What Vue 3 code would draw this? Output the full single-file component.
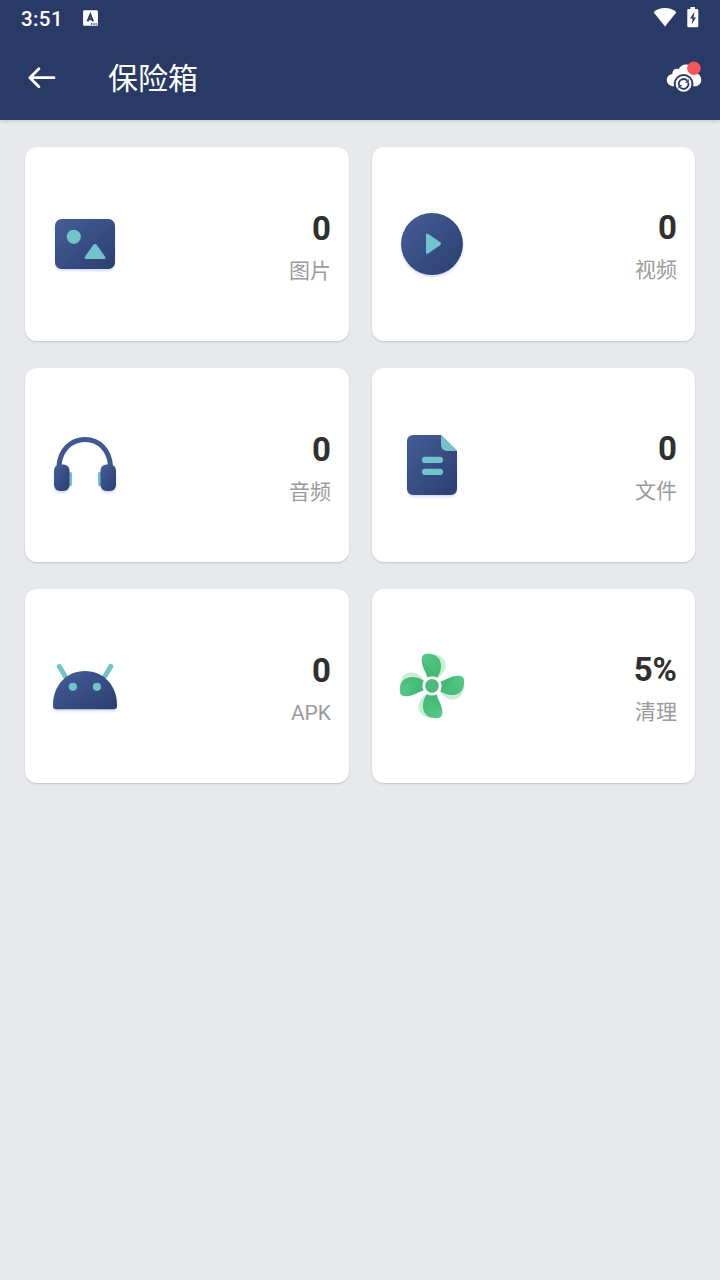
<script setup>
const cards = [
  { icon: 'image', value: '0', label: '图片' },
  { icon: 'video', value: '0', label: '视频', up: true },
  { icon: 'audio', value: '0', label: '音频' },
  { icon: 'file', value: '0', label: '文件', up: true },
  { icon: 'apk', value: '0', label: 'APK' },
  { icon: 'clean', value: '5%', label: '清理', up: true }
]
const angles = [0, 90, 180, 270]
</script>

<template>
  <div class="screen">
    <svg class="defs" width="0" height="0" aria-hidden="true">
      <defs>
        <linearGradient id="navy" x1="0" y1="0" x2="1" y2="1">
          <stop offset="0" stop-color="#455e98" />
          <stop offset="1" stop-color="#2b3e70" />
        </linearGradient>
        <linearGradient id="leaf" x1="0" y1="0" x2="1" y2="1">
          <stop offset="0" stop-color="#58ca89" />
          <stop offset="1" stop-color="#42b671" />
        </linearGradient>
      </defs>
    </svg>

    <header class="top">
      <div class="status">
        <span class="time">3:51</span>
        <svg class="ime" width="16" height="16" viewBox="0 0 16 16">
          <rect x="0.1" y="0.2" width="14.8" height="15.6" rx="1.2" fill="#fff" />
          <path d="M4.500 11.400 7.300 4.600 10.100 11.400M5.500 9.200h3.600" fill="none" stroke="#293a66" stroke-width="1.900" />
          <path d="M8 14h1.400M10.400 14h1.400M12.600 14h1.200" stroke="#293a66" stroke-width="1.300" />
        </svg>
        <span class="grow"></span>
        <svg class="wifi" width="24" height="20" viewBox="0 0 24 20">
          <path d="M12 19.500.6 5.200C3.800 2.400 7.600 1.100 12 1.100s8.200 1.300 11.400 4.100Z" fill="#fff" />
        </svg>
        <svg class="battery" width="12" height="21" viewBox="0 0 12 21">
          <path d="M3.500 0h4.500v2h2q1.300 0 1.300 1.300v15.600q0 1.300-1.300 1.300H1.600Q.3 20.200.3 18.900V3.300Q.3 2 1.600 2h1.900Z" fill="#fff" />
          <path d="M7.500 4.800 3 11.500h2.600L4.700 17.500 9 10.400H6.600Z" fill="#293a66" />
        </svg>
      </div>
      <div class="bar">
        <svg class="back" width="28" height="22" viewBox="0 0 28 22">
          <path d="M26 10.700H2.200M10.900 1.700 1.900 10.700l9 9" fill="none" stroke="#fff" stroke-width="2.800" stroke-linecap="round" stroke-linejoin="round" />
        </svg>
        <h1>保险箱</h1>
        <span class="grow"></span>
        <svg class="cloud" width="36" height="34" viewBox="0 0 36 34">
          <path d="M8 25.300C3.800 25.300.8 22.500.8 19c0-3.300 2.300-5.600 5.500-6.100.2-4.200 3.200-6.200 6.100-4.700C14.300 5.100 17.200 3.400 20.500 3.600c5.500.2 9.300 4 9.500 8.600 3.300.7 5.300 3.100 5.300 6.500 0 4-2.800 6.600-6.800 6.600Z" fill="#fff" />
          <circle cx="17.600" cy="22.900" r="9.900" fill="#293a66" />
          <circle cx="17.600" cy="22.900" r="7.900" fill="#fff" />
          <path d="M12.900 24.100a4.900 4.900 0 0 1 8.200-4.600M22.300 21.800a4.900 4.900 0 0 1-8.200 4.600" fill="none" stroke="#293a66" stroke-width="1.800" />
          <path d="M22.800 18v3.800h-3.800ZM12.400 27.900v-3.800h3.800Z" fill="#293a66" />
          <circle cx="27.900" cy="7.300" r="6.800" fill="#f7575c" />
        </svg>
      </div>
    </header>

    <main class="grid">
      <section v-for="card in cards" :key="card.icon" class="card">
        <svg class="icon" width="72" height="72" viewBox="0 0 72 72">
          <g v-if="card.icon === 'image'">
            <rect class="lift" x="6" y="11" width="60" height="50" rx="6.500" fill="url(#navy)" />
            <circle cx="24.800" cy="28.800" r="7.100" fill="#72c4cc" />
            <path d="M44.200 37q1.800-2 3.600 0L56 48.500q1.200 2.500-1 2.500H37q-2.200 0-1-2.500Z" fill="#72c4cc" />
          </g>
          <g v-else-if="card.icon === 'video'">
            <circle class="lift" cx="36" cy="36" r="31" fill="url(#navy)" />
            <path d="M30 27.200q0-2.500 2.200-1.200L44 34q2 1.600 0 3.200L32.200 45.500Q30 46.700 30 44.200Z" fill="#72c4cc" />
          </g>
          <g v-else-if="card.icon === 'audio'">
            <path d="M20 43h1.500q1.500 0 1.500 1.500v11q0 1.500-1.500 1.500H20ZM52 43h-1.500q-1.500 0-1.500 1.500v11q0 1.500 1.500 1.500H52Z" fill="#72c4cc" />
            <path d="M10 37C11 21 22 10.500 36 10.500S60.500 21 61.500 37" fill="none" stroke="#405891" stroke-width="5" />
            <rect class="lift" x="5" y="35.500" width="15.500" height="26.500" rx="6" fill="url(#navy)" />
            <rect class="lift" x="51.500" y="35.500" width="15.500" height="26.500" rx="6" fill="url(#navy)" />
          </g>
          <g v-else-if="card.icon === 'file'">
            <path class="lift" d="M17.500 6H45l16 16v37.500q0 6.500-6.500 6.500h-37Q11 66 11 59.500v-47Q11 6 17.500 6Z" fill="url(#navy)" />
            <path d="M45 6v9.500q0 6.500 6.500 6.500H61Z" fill="#72c4cc" />
            <rect x="26" y="27.800" width="21" height="6.200" rx="3.100" fill="#72c4cc" />
            <rect x="26" y="39.800" width="21" height="6.200" rx="3.100" fill="#72c4cc" />
          </g>
          <g v-else-if="card.icon === 'apk'">
            <path d="M10.300 16.500 16 26M61.700 16.500 56 26" stroke="#72c4cc" stroke-width="5" stroke-linecap="round" />
            <path class="lift" d="M4 55C4 35.500 17.500 21 36 21s32 14.500 32 34v1q0 3.200-3.500 3.200h-57Q4 59.200 4 56Z" fill="url(#navy)" />
            <circle cx="23.900" cy="36.800" r="4.100" fill="#72c4cc" />
            <circle cx="47.900" cy="36.800" r="4.100" fill="#72c4cc" />
          </g>
          <g v-else>
            <path v-for="a in angles" :key="'s' + a" :transform="`rotate(${a} 36 36)`" d="M30 4.200C39 3 47.500 5.500 49.300 12.500 50.500 19 47 24.500 42 28L34 27Z" fill="#c8eed8" />
            <g v-for="a in angles" :key="a" :transform="`rotate(${a} 36 36)`">
              <path d="M28.500 4.300C34 3 40.500 4.500 43.500 9.500c3 5.500 1.500 13-2.500 18.500h-9.500C30.500 22.500 25.600 17 25.700 9.500c.1-2.700.9-4.600 2.800-5.200Z" fill="url(#leaf)" />
              <path d="M26 7.500C27 16 38 17 38.500 28h-7C30.500 22.500 25.600 17 25.700 9.500q0-1.100.3-2Z" fill="#2fa860" opacity=".25" />
            </g>
            <circle cx="36" cy="35.900" r="9.700" fill="#fff" />
            <circle cx="36" cy="35.800" r="6.900" fill="#4bbb78" />
          </g>
        </svg>
        <div class="info" :class="{ up: card.up }">
          <strong>{{ card.value }}</strong>
          <span>{{ card.label }}</span>
        </div>
      </section>
    </main>
  </div>
</template>

<style>
body {
  background: #e7e9ed;
}
</style>

<style scoped>
.screen {
  height: 1280px;
  background: #e7e9ed;
  font-family: Roboto, "Noto Sans CJK SC", sans-serif;
  overflow: hidden;
}
.defs {
  display: block;
}
.top {
  height: 120px;
  background: #293a66;
  color: #fff;
  box-shadow: 0 1px 4px rgba(0, 0, 0, 0.16);
}
.status {
  display: flex;
  align-items: flex-start;
  height: 36px;
  padding: 0 21px;
}
.time {
  width: 62px;
  padding-top: 7px;
  font-size: 20.5px;
  line-height: 24px;
  font-weight: 500;
  letter-spacing: 0.4px;
}
.ime {
  margin-top: 10px;
}
.grow {
  flex: 1;
}
.wifi {
  margin: 7px 10px 0 0;
}
.battery {
  margin-top: 7px;
}
.bar {
  display: flex;
  align-items: center;
  height: 84px;
  padding: 0 18px 0 28px;
}
.back {
  margin-right: 52px;
}
h1 {
  margin: 0;
  padding-top: 2px;
  font-size: 30px;
  line-height: 44px;
  font-weight: 400;
}
.cloud {
  margin-top: -1px;
}
.grid {
  display: grid;
  grid-template-columns: 1fr 1fr;
  grid-auto-rows: 194px;
  gap: 27px 23px;
  padding: 27px 25px;
}
.card {
  display: flex;
  align-items: center;
  justify-content: space-between;
  padding: 0 18px 0 24px;
  border-radius: 12px;
  background: #fff;
  box-shadow: 0 1px 2px rgba(0, 0, 0, 0.16);
}
.icon {
  display: block;
}
.lift {
  filter: drop-shadow(0 2px 1px rgba(80, 100, 210, 0.22));
}
.info {
  display: flex;
  flex-direction: column;
  align-items: flex-end;
  margin-right: -0.5px;
  padding-top: 8px;
}
.info.up {
  margin-right: 0;
  padding-top: 6px;
}
strong {
  color: #303030;
  font-size: 33px;
  line-height: 40px;
  font-weight: 700;
}
.info span {
  margin-top: 6px;
  color: #9b9b9b;
  font-size: 21px;
  line-height: 32px;
}
</style>
